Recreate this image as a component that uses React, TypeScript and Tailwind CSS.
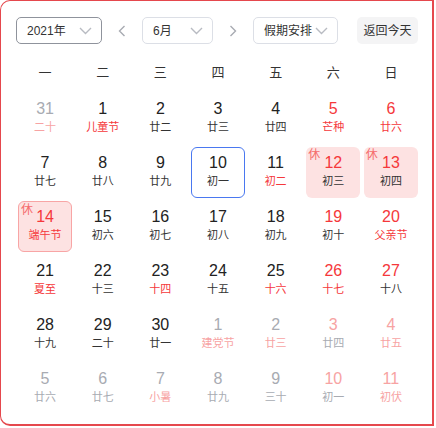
import React from "react";

type Day = {
  n: number;
  l: string;
  nc?: string;
  lc?: string;
  rest?: boolean;
  today?: boolean;
  sel?: boolean;
};

const RED = "text-[#f5383b]";
const DARK = "text-[#222]";
const LDARK = "text-[#333]";
const GRAY = "text-[#a8abb2]";
const PINK = "text-[#f7a3a3]";

const days: Day[] = [
  { n: 31, l: "二十", nc: GRAY, lc: PINK },
  { n: 1, l: "儿童节", lc: RED },
  { n: 2, l: "廿二" },
  { n: 3, l: "廿三" },
  { n: 4, l: "廿四" },
  { n: 5, l: "芒种", nc: RED, lc: RED },
  { n: 6, l: "廿六", nc: RED, lc: RED },
  { n: 7, l: "廿七" },
  { n: 8, l: "廿八" },
  { n: 9, l: "廿九" },
  { n: 10, l: "初一", today: true },
  { n: 11, l: "初二", lc: RED },
  { n: 12, l: "初三", nc: RED, rest: true },
  { n: 13, l: "初四", nc: RED, rest: true },
  { n: 14, l: "端午节", nc: RED, lc: RED, rest: true, sel: true },
  { n: 15, l: "初六" },
  { n: 16, l: "初七" },
  { n: 17, l: "初八" },
  { n: 18, l: "初九" },
  { n: 19, l: "初十", nc: RED },
  { n: 20, l: "父亲节", nc: RED, lc: RED },
  { n: 21, l: "夏至", lc: RED },
  { n: 22, l: "十三" },
  { n: 23, l: "十四", lc: RED },
  { n: 24, l: "十五" },
  { n: 25, l: "十六", lc: RED },
  { n: 26, l: "十七", nc: RED, lc: RED },
  { n: 27, l: "十八", nc: RED },
  { n: 28, l: "十九" },
  { n: 29, l: "二十" },
  { n: 30, l: "廿一" },
  { n: 1, l: "建党节", nc: GRAY, lc: PINK },
  { n: 2, l: "廿三", nc: GRAY, lc: PINK },
  { n: 3, l: "廿四", nc: PINK, lc: GRAY },
  { n: 4, l: "廿五", nc: PINK, lc: PINK },
  { n: 5, l: "廿六", nc: GRAY, lc: GRAY },
  { n: 6, l: "廿七", nc: GRAY, lc: GRAY },
  { n: 7, l: "小暑", nc: GRAY, lc: PINK },
  { n: 8, l: "廿九", nc: GRAY, lc: GRAY },
  { n: 9, l: "三十", nc: GRAY, lc: GRAY },
  { n: 10, l: "初一", nc: PINK, lc: GRAY },
  { n: 11, l: "初伏", nc: PINK, lc: PINK },
];

const weekdays = ["一", "二", "三", "四", "五", "六", "日"];

function Chevron({ dir }: { dir: "down" | "left" | "right" }) {
  if (dir === "down")
    return (
      <svg width="13" height="8" viewBox="0 0 13 8" fill="none">
        <path d="M1 1l5.5 5.5L12 1" stroke="#b8bbc2" strokeWidth="1.4" />
      </svg>
    );
  return (
    <svg width="8" height="12" viewBox="0 0 8 12" fill="none">
      <path
        d={dir === "left" ? "M6.5 1L1.5 6l5 5" : "M1.5 1l5 5-5 5"}
        stroke="#a8abb2"
        strokeWidth="1.4"
      />
    </svg>
  );
}

function Select({ label, w, dark }: { label: string; w: string; dark?: boolean }) {
  return (
    <div
      className={`${w} h-[27px] flex items-center justify-between pl-[10px] pr-[9px] rounded-[5px] border ${
        dark ? "border-[#8f939c]" : "border-[#dcdfe6]"
      } text-[12px] text-[#333] whitespace-nowrap`}
    >
      <span>{label}</span>
      <Chevron dir="down" />
    </div>
  );
}

export default function App() {
  return (
    <div
      className="w-[434px] h-[426px] bg-white border border-r-2 border-b-2 border-[#e5484d] rounded-l-[10px] pt-4 pl-[15px]"
      style={{ fontFamily: '"Liberation Sans", "Noto Sans CJK SC", sans-serif' }}
    >
      <div className="flex items-center">
        <Select label="2021年" w="w-[86px]" dark />
        <div className="w-[40px] flex justify-center">
          <Chevron dir="left" />
        </div>
        <Select label="6月" w="w-[71px]" />
        <div className="w-[40px] flex justify-center">
          <Chevron dir="right" />
        </div>
        <Select label="假期安排" w="w-[85px]" />
        <button className="ml-[19px] w-[61px] h-[27px] rounded-[5px] bg-[#f4f4f5] text-[12px] text-[#333] whitespace-nowrap">
          返回今天
        </button>
      </div>

      <div className="w-[400px] ml-[2px] mt-[16px] grid grid-cols-7 gap-x-[3.5px]">
        {weekdays.map((d) => (
          <div key={d} className="h-[26px] flex items-center justify-center text-[13px] text-[#333]">
            {d}
          </div>
        ))}
      </div>

      <div className="w-[400px] ml-[2px] mt-[7px] grid grid-cols-7 gap-x-[3.5px] gap-y-[3px]">
        {days.map((d, i) => (
          <div
            key={i}
            className={`relative h-[51px] rounded-[6px] flex flex-col items-center justify-center pb-[3px] ${
              d.rest ? "bg-[#fde2e2]" : ""
            } ${d.sel ? "border border-[#f8a5a5]" : ""} ${d.today ? "border border-[#4a78f0]" : ""}`}
          >
            {d.rest && (
              <span className="absolute left-[2px] top-[1px] text-[12px] leading-[14px] text-[#f56c6c]">休</span>
            )}
            <span className={`text-[16px] leading-[18px] ${d.nc ?? DARK}`}>{d.n}</span>
            <span className={`text-[11px] leading-[14px] mt-[2px] ${d.lc ?? LDARK}`}>{d.l}</span>
          </div>
        ))}
      </div>
    </div>
  );
}
